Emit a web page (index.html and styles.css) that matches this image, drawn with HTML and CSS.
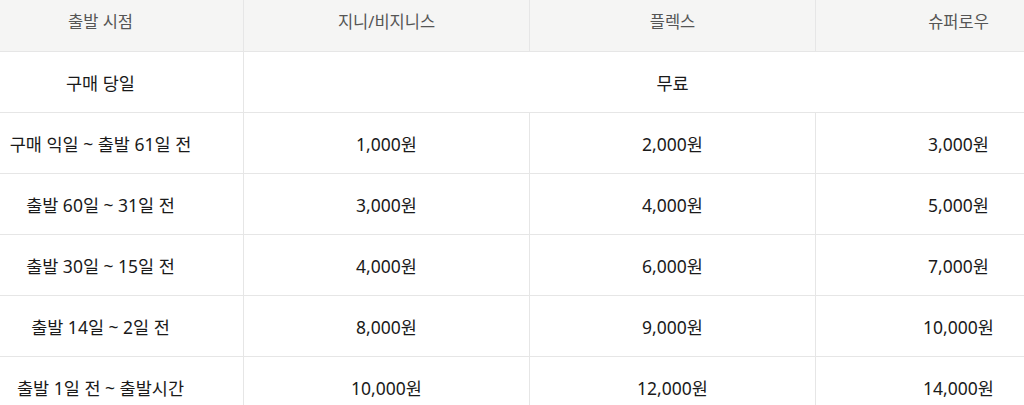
FILE: index.html
```html
<!DOCTYPE html>
<html lang="ko">
<head>
<meta charset="utf-8">
<link rel="stylesheet" href="styles.css">
</head>
<body>
<div class="wrap">
<table class="fee">
  <thead>
    <tr><th>출발 시점</th><th>지니/비지니스</th><th>플렉스</th><th>슈퍼로우</th></tr>
  </thead>
  <tbody>
    <tr><td>구매 당일</td><td colspan="3">무료</td></tr>
    <tr><td>구매 익일 ~ 출발 61일 전</td><td>1,000원</td><td>2,000원</td><td>3,000원</td></tr>
    <tr><td>출발 60일 ~ 31일 전</td><td>3,000원</td><td>4,000원</td><td>5,000원</td></tr>
    <tr><td>출발 30일 ~ 15일 전</td><td>4,000원</td><td>6,000원</td><td>7,000원</td></tr>
    <tr><td>출발 14일 ~ 2일 전</td><td>8,000원</td><td>9,000원</td><td>10,000원</td></tr>
    <tr><td>출발 1일 전 ~ 출발시간</td><td>10,000원</td><td>12,000원</td><td>14,000원</td></tr>
  </tbody>
</table>
</div>
</body>
</html>
```
FILE: styles.css
```css
html, body {
  margin: 0;
  padding: 0;
  background: #fff;
  overflow: hidden;
}
.wrap {
  width: 1024px;
  height: 405px;
  overflow: hidden;
}
.fee {
  border-collapse: collapse;
  table-layout: fixed;
  width: 1144px;
  margin: -9px 0 0 -43px;
  font-family: "Noto Sans", "Noto Sans CJK KR", sans-serif;
  font-size: 17.5px;
}
.fee th, .fee td {
  width: 285px;
  height: 60px;
  padding: 0;
  text-align: center;
  vertical-align: middle;
  border: 1px solid #e6e6e6;
  border-top: none;
}
.fee th {
  background: #f5f5f4;
  color: #555;
  font-weight: 400;
  font-size: 16.5px;
}
.fee td {
  color: #1a1a1a;
}
```
